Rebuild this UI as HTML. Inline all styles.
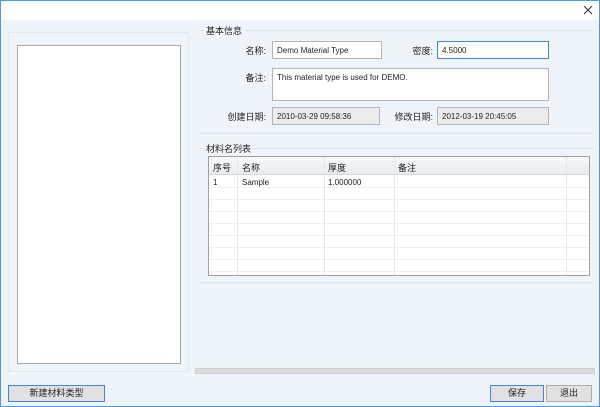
<!DOCTYPE html>
<html><head><meta charset="utf-8"><style>
*{margin:0;padding:0;box-sizing:border-box}
body{width:600px;height:407px;overflow:hidden;background:#eef4fa;font-family:"Liberation Sans","Noto Sans CJK SC",sans-serif;font-size:9px;color:#222;position:relative}
.a{position:absolute}
.win{left:0;top:0;width:600px;height:407px;border:1px solid #4a9be0}
.title{left:1px;top:1px;width:598px;height:19px;background:#fff}
.inp{position:absolute;background:#fff;border:1px solid #b4b4b4;padding:3px 4px;font-size:8px;line-height:12px}
.gray{background:#ececec}
.lbl{position:absolute;font-size:9px;text-align:right}
.btn{position:absolute;height:17px;border:1px solid #adadad;background:#e1e1e1;text-align:center;font-size:9px;line-height:15px}
.col{position:absolute;top:0;bottom:0;border-left:1px solid #e4e8ee}
.row{position:absolute;left:0;right:0;border-top:1px solid #eef0f3}
</style></head><body>
<div class="a win"></div>
<div class="a title"></div>
<svg class="a" style="left:583px;top:5px" width="10" height="10"><path d="M1 1L9 9M9 1L1 9" stroke="#333" stroke-width="1"/></svg>
<div class="a" style="left:8px;top:32px;width:181px;height:340px;border:1px solid #e3e9f0"></div>
<div class="a" style="left:17px;top:45px;width:164px;height:319px;background:#fff;border:1px solid #a8a8a8"></div>

<div class="a" style="left:200px;top:30px;width:394px;height:104px;border-top:1px solid #dde3ea;border-bottom:1px solid #dde3ea"></div>
<div class="a" style="left:204px;top:24px;background:#eef4fa;padding:0 2px;font-size:9px">基本信息</div>
<div class="lbl" style="left:230px;top:44px;width:36px">名称:</div>
<div class="inp" style="left:272px;top:41px;width:110px;height:18px">Demo Material Type</div>
<div class="lbl" style="left:395px;top:44px;width:38px">密度:</div>
<div class="inp" style="left:437px;top:41px;width:112px;height:18px;border-color:#3c8ad8">4.5000</div>
<div class="lbl" style="left:230px;top:71px;width:36px">备注:</div>
<div class="inp" style="left:272px;top:68px;width:277px;height:33px">This material type is used for DEMO.</div>
<div class="lbl" style="left:215px;top:110px;width:51px">创建日期:</div>
<div class="inp gray" style="left:272px;top:107px;width:108px;height:18px">2010-03-29 09:58:36</div>
<div class="lbl" style="left:380px;top:110px;width:53px">修改日期:</div>
<div class="inp gray" style="left:437px;top:107px;width:112px;height:18px">2012-03-19 20:45:05</div>

<div class="a" style="left:200px;top:148px;width:394px;height:135px;border-top:1px solid #dde3ea;border-bottom:1px solid #dde3ea"></div>
<div class="a" style="left:204px;top:142px;background:#eef4fa;padding:0 2px">材料名列表</div>
<div class="a" style="left:208px;top:156px;width:382px;height:120px;background:#fff;border:1px solid #a0a0a0;overflow:hidden">
 <div class="a" style="left:0;top:0;width:380px;height:18px;background:linear-gradient(#f7f9fb,#e8ecf0);border-bottom:1px solid #d5d9de"></div>
 <div class="row" style="top:30px"></div><div class="row" style="top:42px"></div><div class="row" style="top:54px"></div><div class="row" style="top:66px"></div><div class="row" style="top:78px"></div><div class="row" style="top:90px"></div><div class="row" style="top:102px"></div><div class="row" style="top:114px"></div>
 <div class="col" style="left:28px"></div><div class="col" style="left:115px"></div><div class="col" style="left:185px"></div><div class="col" style="left:357px"></div>
 <div class="a" style="left:4px;top:4px">序号</div><div class="a" style="left:33px;top:4px">名称</div><div class="a" style="left:119px;top:4px">厚度</div><div class="a" style="left:189px;top:4px">备注</div>
 <div class="a" style="left:4px;top:21px;font-size:8px">1</div><div class="a" style="left:33px;top:21px;font-size:8px">Sample</div><div class="a" style="left:119px;top:21px;font-size:8px">1.000000</div>
</div>

<div class="a" style="left:195px;top:368px;width:400px;height:6px;background:#dcdcdc;border:1px solid #cfcfcf"></div>
<div class="btn" style="left:8px;top:385px;width:97px;border-color:#3c8ad8">新建材料类型</div>
<div class="btn" style="left:490px;top:385px;width:54px;border-color:#3c8ad8">保存</div>
<div class="btn" style="left:546px;top:385px;width:46px">退出</div>
</body></html>
